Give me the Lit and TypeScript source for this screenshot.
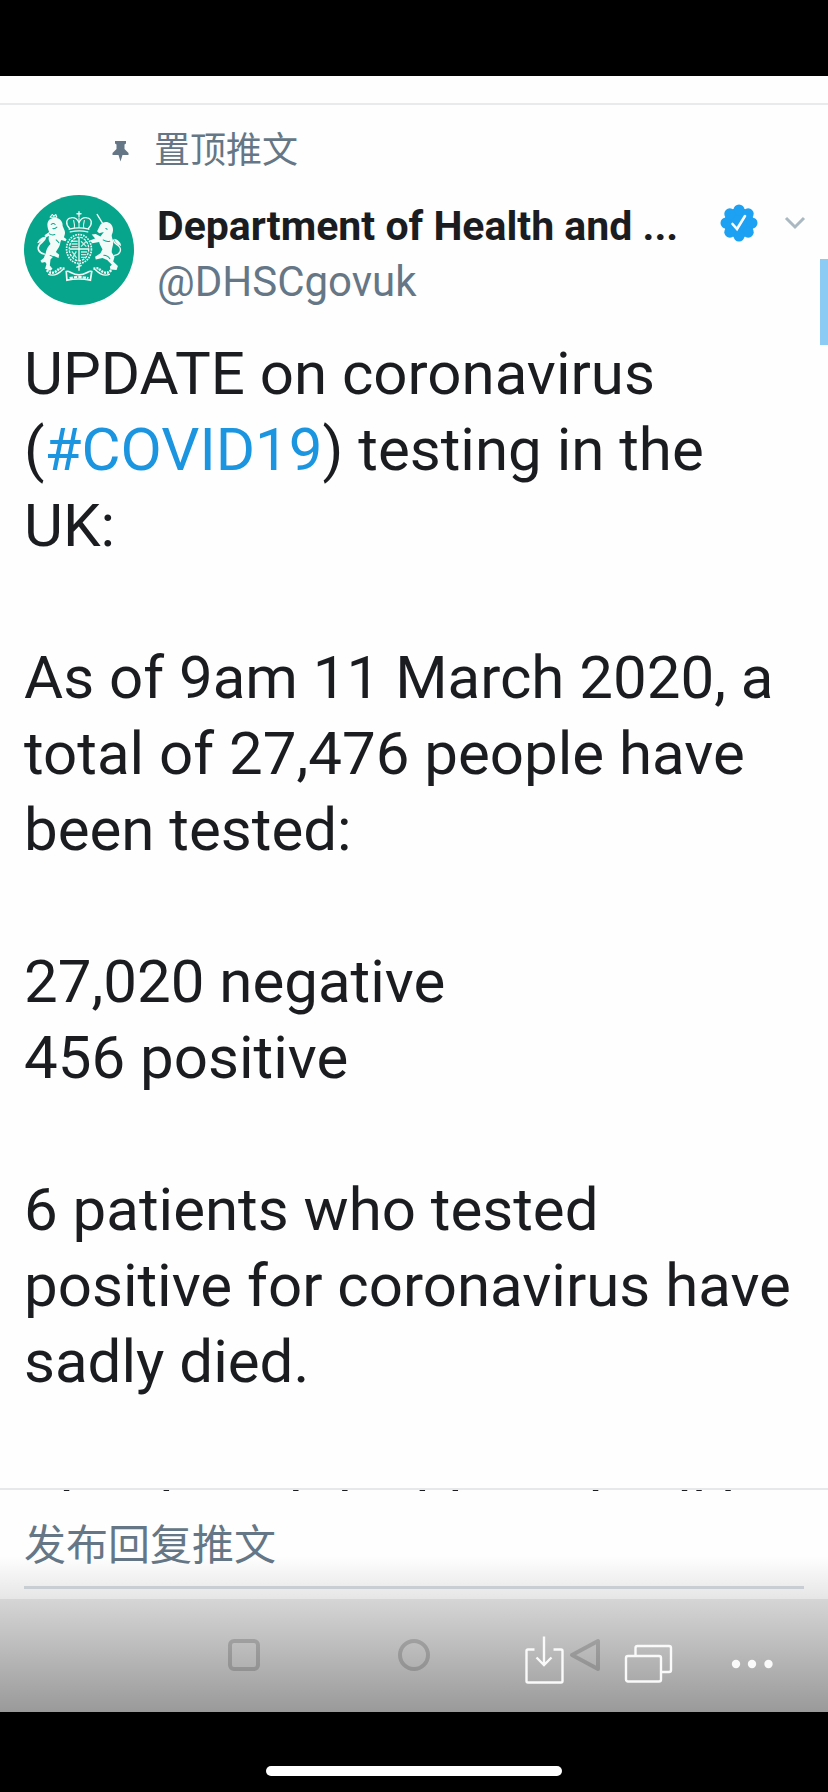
import { LitElement, html, css, svg } from "lit";
import { customElement } from "lit/decorators.js";

const crest = svg`
  <circle cx="176" cy="180" r="164" fill="#07a68c"/>
  <g fill="none" stroke="#f2fbf8" stroke-width="4" stroke-linecap="round" stroke-linejoin="round">
    <path d="M176 66v14M170 72h12" stroke-width="4"/>
    <path d="M148 116c-14-14-10-30 4-32 12-2 20 6 24 14 4-8 12-16 24-14 14 2 18 18 4 32" stroke-width="4"/>
    <path d="M176 84v28M160 92c2 8 4 14 2 22M192 92c-2 8-4 14-2 22" stroke-width="3"/>
    <path d="M147 118c18-5 40-5 58 0M150 126c17-4 36-4 52 0" stroke-width="4"/>
    <path d="M72 192c-16-4-22-16-14-28 6-8 16-10 18-22" stroke-width="5"/>
    <path d="M54 158c2-8 10-16 20-16-2 8-8 14-20 16z" fill="#f2fbf8" stroke-width="2"/>
    <path d="M282 196c16-2 22-16 14-26-6-8-16-8-18-20" stroke-width="4"/>
    <path d="M300 166c0-8-8-16-18-18 2 8 8 16 18 18z" fill="#f2fbf8" stroke-width="2"/>
    <path d="M246 100l-16-26" stroke-width="4"/>
    <path d="M90 82l6-8 5 5 6-5 3 8z" stroke-width="3"/>
  </g>
  <g fill="#f2fbf8">
    <path d="M84 94c6-10 24-14 36-4 4 4 8 10 7 18l6 14c3 8 0 14-2 20l8 6-3 6-13-4c-4 8-2 16-10 26l-6 10 10 8-2 10-14-6-10 10-2 18 8 10-6 6-16-6 4-14-4-6-10 2-4-6 10-8 6-16c2-10 6-18 14-26-4-8-8-14-4-24l-10 4-4-6 14-10c-4-10-8-22-3-32z"/>
    <path d="M240 104c8-10 22-10 30-2 8 8 10 20 4 32-2 8 4 14 4 24 0 12-6 20-4 30l8 12-4 14 14 14-4 12-18-2-2-8 6-6-14-14-14-6-20 4-2-8 16-10 6-12c-4-8-8-14-10-22l-20 4-8-8 16-6-10-12 12-2 14 8 10-14-14 4-6-6z"/>
  </g>
  <g fill="none" stroke="#f2fbf8">
    <ellipse cx="176" cy="177" rx="37" ry="43" stroke-width="5" stroke-dasharray="5 3"/>
    <ellipse cx="176" cy="177" rx="29" ry="35" stroke-width="4" stroke-dasharray="8 3"/>
    <path d="M176 142v70M148 177h56" stroke-width="4"/>
    <path d="M154 154h18M154 162h18M154 170h18M182 154l16 16M198 154l-16 16M155 184l14 20M168 184l-10 18M182 186h18M182 194h16M182 202h12" stroke-width="4" opacity=".8"/>
    <path d="M176 220v22M168 232l16-6" stroke-width="4"/>
    <path d="M80 240c12 14 26 8 38-6l16 2M272 240c-12 14-26 8-38-6l-16 2" stroke-width="7" stroke-dasharray="6 3"/>
    <path d="M84 252c16 8 30 0 44-14M268 252c-16 8-30 0-44-14" stroke-width="4"/>
    <path d="M138 244c10-4 16 10 38 10s28-14 38-10l-4 26c-20-4-50-4-70 0z" stroke-width="5"/>
    <path d="M148 264c18-4 38-4 56 0" stroke-width="7" stroke-dasharray="10 3"/>
  </g>
  <g stroke="#07a68c" stroke-width="3" fill="none" stroke-linecap="round">
    <path d="M93 104c4-4 8-4 12 0M98 116c6 2 10-2 12-4M88 132c6 4 10 4 16 2M90 196c8 2 14 6 18 12M256 116l4 2M248 150c6 4 12 6 20 4M250 196c8 0 14 4 18 10M108 150l8 8"/>
  </g>`;

@customElement("app-root")
export class AppRoot extends LitElement {
  static styles = css`
    :host {
      display: flex;
      flex-direction: column;
      box-sizing: border-box;
      height: 100vh;
      padding: 76px 0 0;
      background: #000;
      color: #1a1c1f;
      font-family: Roboto, "Noto Sans CJK SC", sans-serif;
    }
    *, *::before, *::after { box-sizing: border-box; }
    svg { display: block; flex: none; }
    button {
      padding: 0;
      border: 0;
      background: none;
      color: inherit;
      font: inherit;
    }
    .screen {
      position: relative;
      flex: 1;
      min-height: 0;
      display: flex;
      flex-direction: column;
      background: #fefefe;
    }
    .tweet {
      flex: 1;
      min-height: 0;
      overflow: hidden;
      margin-top: 27px;
      border-top: 2px solid #e8eaeb;
      padding: 20px 22px 0 24px;
    }
    .pinned {
      display: flex;
      align-items: center;
      gap: 25px;
      height: 52px;
      padding-left: 88px;
      color: #657786;
      font-size: 36px;
      line-height: 52px;
    }
    .author {
      display: flex;
      margin-top: 18px;
      gap: 23px;
    }
    .avatar { width: 110px; height: 110px; }
    .names {
      flex: 1;
      min-width: 0;
      padding-top: 3px;
    }
    .name-row {
      display: flex;
      align-items: center;
      height: 56px;
    }
    .name {
      flex: 1;
      margin: 0;
      font-size: 41px;
      line-height: 56px;
      font-weight: 700;
      white-space: nowrap;
    }
    .badge, .more { margin-bottom: 6px; }
    .more { margin-left: 26px; color: #aab8c2; }
    .handle {
      display: block;
      color: #657786;
      font-size: 42px;
      line-height: 56px;
      text-decoration: none;
    }
    .text {
      margin: 26px 0 0;
      font-size: 60px;
      line-height: 76px;
      white-space: pre-wrap;
    }
    .tag { color: #1b95e0; text-decoration: none; }
    .scroll-thumb {
      position: absolute;
      top: 183px;
      right: 0;
      width: 8px;
      height: 86px;
      background: #8ccbf3;
    }
    .reply {
      margin-top: -3px;
      border-top: 2px solid #e6e8e9;
      padding: 27px 24px 10px;
    }
    .reply-input {
      display: block;
      width: 100%;
      height: 72px;
      padding: 0 0 12px;
      border: 0;
      border-bottom: 3px solid #d7dde2;
      border-radius: 0;
      background: none;
      color: inherit;
      font-family: inherit;
      font-size: 42px;
      line-height: 56px;
    }
    .reply-input::placeholder { color: #657786; opacity: 1; }
    .system-nav {
      display: grid;
      grid-template-columns: repeat(3, 170px);
      justify-content: center;
      justify-items: center;
      height: 113px;
      padding-top: 39px;
      background: #ececec;
      color: #c4c4c4;
    }
    .system-nav button { height: 36px; }
    .viewer-bar {
      position: absolute;
      right: 0;
      bottom: 0;
      left: 0;
      display: flex;
      justify-content: flex-end;
      align-items: flex-end;
      gap: 58px;
      height: 156px;
      padding: 0 53px 27px 0;
      background: linear-gradient(rgba(0, 0, 0, 0), rgba(0, 0, 0, .35));
      color: #fafafa;
      pointer-events: none;
    }
    .viewer-bar button { pointer-events: auto; }
    .home-area {
      display: flex;
      justify-content: center;
      height: 80px;
      padding-top: 54px;
    }
    .home-bar {
      width: 296px;
      height: 10px;
      border-radius: 5px;
      background: #fff;
    }
  `;

  render() {
    return html`
      <main class="screen">
        <article class="tweet">
          <div class="pinned">
            <svg width="17" height="22" viewBox="0 0 17 22" fill="#657786" aria-hidden="true">
              <path d="M3 1h11v2.500l-1.500 1V9l4 4v2H10.500L8.500 21.500 6.500 15H.5v-2l4-4V4.500L3 3.500z"/>
            </svg>
            <span>置顶推文</span>
          </div>
          <header class="author">
            <svg class="avatar" viewBox="12 16 328 328" role="img" aria-label="DHSC">${crest}</svg>
            <div class="names">
              <div class="name-row">
                <h1 class="name">Department of Health and ...</h1>
                <svg class="badge" width="38" height="38" viewBox="0 0 38 38" role="img" aria-label="Verified">
                  <g fill="#1da1f2">
                    <circle cx="19" cy="19" r="15"/>
                    <circle cx="19" cy="6" r="5.500"/><circle cx="28.200" cy="9.800" r="5.500"/>
                    <circle cx="32" cy="19" r="5.500"/><circle cx="28.200" cy="28.200" r="5.500"/>
                    <circle cx="19" cy="32" r="5.500"/><circle cx="9.800" cy="28.200" r="5.500"/>
                    <circle cx="6" cy="19" r="5.500"/><circle cx="9.800" cy="9.800" r="5.500"/>
                  </g>
                  <path d="M12.500 20l4.500 5 8-13" fill="none" stroke="#fff" stroke-width="2.600" stroke-linecap="round"/>
                </svg>
                <button class="more" aria-label="More">
                  <svg width="22" height="14" viewBox="0 0 22 14" fill="none" stroke="currentColor" stroke-width="3">
                    <path d="M2 2l9 9 9-9"/>
                  </svg>
                </button>
              </div>
              <a class="handle" href="#profile">@DHSCgovuk</a>
            </div>
          </header>
          <p class="text">UPDATE on coronavirus (<a class="tag" href="#covid19">#COVID19</a>) testing in the UK:

As of 9am 11 March 2020, a total of 27,476 people have been tested:

27,020 negative
456 positive

6 patients who tested positive for coronavirus have sadly died.

The digital dashboard will be updated later today.</p>
        </article>
        <div class="scroll-thumb"></div>
        <form class="reply">
          <input class="reply-input" type="text" placeholder="发布回复推文" aria-label="发布回复推文">
        </form>
        <nav class="system-nav">
          <button aria-label="Recent apps">
            <svg width="34" height="36" viewBox="0 0 34 36" fill="none" stroke="currentColor" stroke-width="4">
              <rect x="3" y="3" width="28" height="28" rx="4"/>
            </svg>
          </button>
          <button aria-label="Home">
            <svg width="34" height="36" viewBox="0 0 34 36" fill="none" stroke="currentColor" stroke-width="4">
              <circle cx="17" cy="17" r="14"/>
            </svg>
          </button>
          <button aria-label="Back">
            <svg width="34" height="36" viewBox="0 0 34 36" fill="none" stroke="currentColor" stroke-width="4" stroke-linejoin="round">
              <path d="M31 3v28L5 17z"/>
            </svg>
          </button>
        </nav>
        <div class="viewer-bar">
          <button aria-label="Save">
            <svg width="40" height="50" viewBox="0 0 40 50" fill="none" stroke="currentColor" stroke-width="2.400">
              <path d="M9.500 14.500H3a1.500 1.500 0 0 0-1.500 1.500v30A1.500 1.500 0 0 0 3 47.500h33a1.500 1.500 0 0 0 1.500-1.500V16a1.500 1.500 0 0 0-1.500-1.500h-7.500M19 1.500V30M11.500 22.500L19 30l7.500-7.500"/>
            </svg>
          </button>
          <button aria-label="All pictures">
            <svg width="50" height="50" viewBox="0 0 50 50" fill="none" stroke="currentColor" stroke-width="2.400">
              <rect x="3" y="21" width="35" height="25.500" rx="2"/>
              <path d="M12.500 20v-7a2 2 0 0 1 2-2h31.500a2 2 0 0 1 2 2V35a2 2 0 0 1-2 2h-7"/>
            </svg>
          </button>
          <button aria-label="More options">
            <svg width="44" height="50" viewBox="0 0 44 50" fill="currentColor">
              <circle cx="5" cy="29" r="4.200"/><circle cx="21" cy="29" r="4.200"/><circle cx="37.500" cy="29" r="4.200"/>
            </svg>
          </button>
        </div>
      </main>
      <footer class="home-area"><div class="home-bar"></div></footer>
    `;
  }
}
